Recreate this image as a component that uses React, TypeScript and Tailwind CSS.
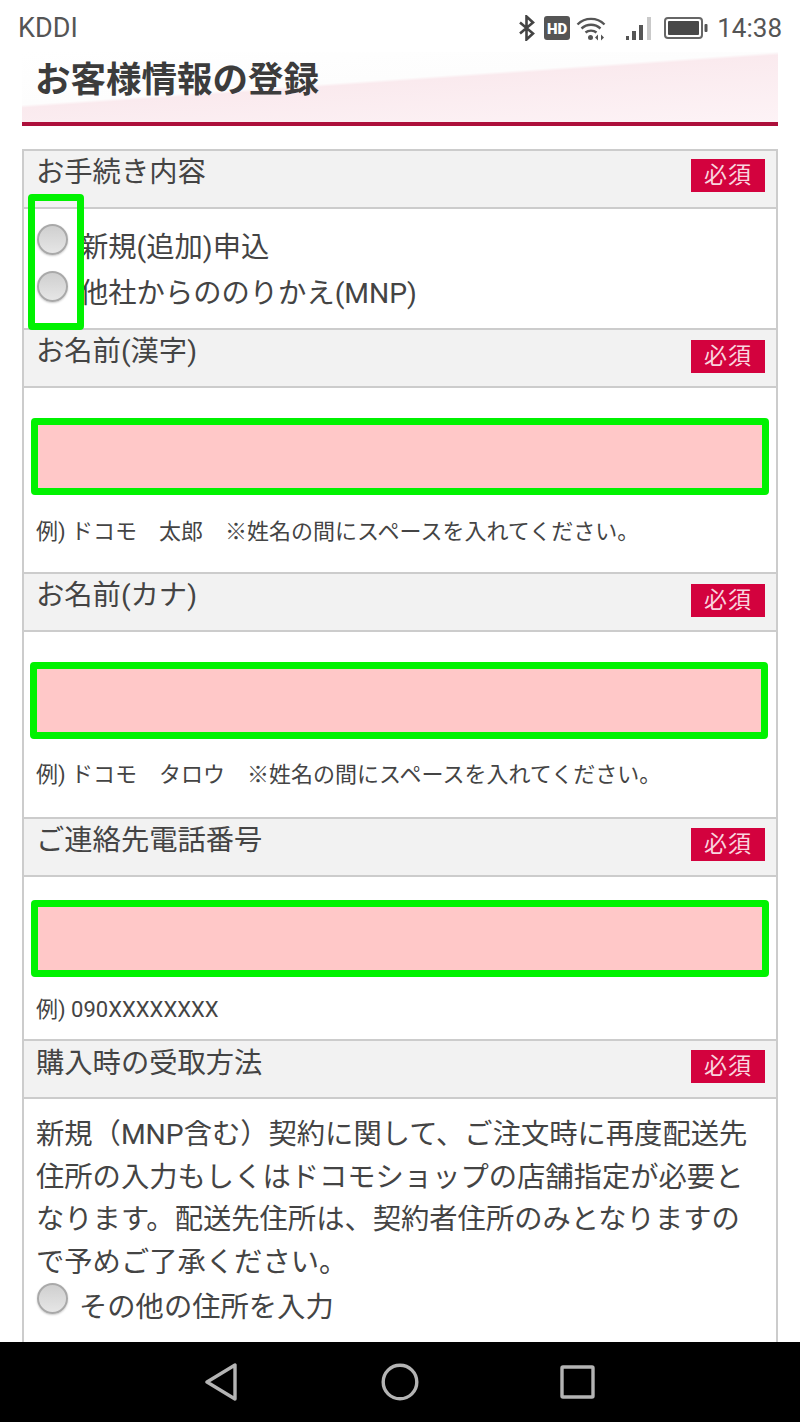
const Radio = () => (
  <span className="block w-[31px] h-[31px] shrink-0 rounded-full border-2 border-[#a9a9a9] bg-[linear-gradient(180deg,#cfcfcf,#e6e6e6)] shadow-[0_1px_2px_#cccccc]" />
);

const Header = ({ label, badge, text }: { label: string; badge: string; text: string }) => (
  <div className="h-[58px] flex justify-between bg-[#f2f2f2] border-b-2 border-[#cccccc] pl-[12px] pr-[11px]">
    <span className={`${text} text-[28.3px] leading-[40px] text-[#444444]`}>{label}</span>
    <span className={`${badge} w-[74px] h-[33px] flex items-center justify-center bg-[#d3023e] text-[#f9d5df] text-[23px] leading-none tracking-[1px]`}>必須</span>
  </div>
);

const Field = ({ hint, pt, pb, mt, dx }: { hint: string; pt: string; pb: string; mt: string; dx: string }) => (
  <div className={`border-b-2 border-[#cccccc] ${pt} ${pb}`}>
    <div className={`h-[77px] ${dx} w-[738px] border-[7px] border-[#00f200] bg-[#ffc8c8] rounded-[4px]`} />
    <p className={`${mt} pl-[12px] text-[22px] leading-[32px] text-[#444444] whitespace-pre`}>{hint}</p>
  </div>
);

export default function App() {
  return (
    <div className="w-[800px] h-[1422px] flex flex-col overflow-hidden bg-white font-['Roboto','Noto_Sans_CJK_JP',sans-serif]">
      <div className="h-[52px] shrink-0 flex items-center justify-between pl-[18px] pr-[18px] text-[#555555]">
        <span className="text-[27px] leading-none mt-[4px]">KDDI</span>
        <div className="flex items-center mt-[4px]">
          <svg width="18" height="26" viewBox="0 0 18 26" fill="none" stroke="#444" strokeWidth="2.6" className="mr-[8px]">
            <path d="M2 7.5 15 18.5 8.5 24.5V1.5L15 7.5 2 18.5" />
          </svg>
          <svg width="26" height="24" viewBox="0 0 26 24" className="mr-[6px]">
            <rect width="26" height="24" rx="3" fill="#555" />
            <text x="13" y="17.5" textAnchor="middle" fontSize="15" fontWeight="900" fill="#fff" fontFamily="Roboto">HD</text>
          </svg>
          <svg width="31" height="25" viewBox="0 0 31 25" fill="none" stroke="#555" strokeWidth="2.4" className="mr-[19px]">
            <path d="M1.5 8.5C9 1 21 1 28.5 8.5" />
            <path d="M5.5 12.5C11 7.5 19 7.5 24.5 12.5" />
            <path d="M9.5 16.5C12.5 14 17.5 14 20.5 16.5" />
            <circle cx="14.5" cy="21.5" r="2.5" fill="#555" stroke="none" />
            <path d="M22 18.5v6l-3-3zM25 18.5v6l3-3z" fill="#555" stroke="none" />
          </svg>
          <svg width="26" height="25" viewBox="0 0 26 25" className="mr-[12px]">
            <rect x="0" y="20" width="3" height="4" fill="#555" />
            <rect x="6" y="15" width="4" height="9" fill="#555" />
            <rect x="13" y="9" width="4" height="15" fill="#555" />
            <rect x="21" y="1" width="4" height="23" fill="#c9c9c9" />
          </svg>
          <svg width="44" height="22" viewBox="0 0 44 22" className="mr-[9px]">
            <rect x="1" y="1" width="37" height="20" rx="3" fill="none" stroke="#666" strokeWidth="2" />
            <rect x="4" y="4" width="31" height="14" rx="1" fill="#484848" />
            <rect x="40.5" y="7" width="3" height="8" rx="1" fill="#555" />
          </svg>
          <span className="text-[26px] leading-none">14:38</span>
        </div>
      </div>

      <div className="mx-[22px] h-[74px] shrink-0 border-b-[4px] border-[#ad0f3b] bg-[linear-gradient(176deg,#ffffff_0%,#fdfdfd_43%,#faeaee_45.5%,#fdf3f6_100%)] pl-[13px]">
        <h1 className="text-[35.5px] leading-[50px] mt-[3px] font-bold text-[#3c3c3c]">お客様情報の登録</h1>
      </div>

      <div className="relative flex-1 min-h-0 overflow-hidden mt-[23px]">
        <div className="mx-[22px] border-x-2 border-t-2 border-[#cccccc]">
          <Header label="お手続き内容" badge="mt-[8px]" text="mt-[2px]" />
          <div className="h-[121px] border-b-2 border-[#cccccc] pt-[15px] pl-[13px] text-[28.3px] text-[#444444]">
            <div className="flex h-[47px] gap-[12px]">
              <Radio />
              <span className="leading-[46px] mt-[1px]">新規(追加)申込</span>
            </div>
            <div className="flex h-[47px] gap-[12px]">
              <Radio />
              <span className="leading-[46px]">他社からののりかえ(MNP)</span>
            </div>
          </div>

          <Header label="お名前(漢字)" badge="mt-[10px]" text="mt-[2px]" />
          <Field hint="例) ドコモ　太郎　※姓名の間にスペースを入れてください。" pt="pt-[30px]" pb="pb-[24px]" mt="mt-[21px]" dx="ml-[7px]" />

          <Header label="お名前(カナ)" badge="mt-[10px]" text="mt-[2px]" />
          <Field hint="例) ドコモ　タロウ　※姓名の間にスペースを入れてください。" pt="pt-[30px]" pb="pb-[26px]" mt="mt-[20px]" dx="ml-[6px]" />

          <Header label="ご連絡先電話番号" badge="mt-[9px]" text="mt-[2px]" />
          <Field hint="例) 090XXXXXXXX" pt="pt-[23px]" pb="pb-[13px]" mt="mt-[17px]" dx="ml-[7px]" />

          <Header label="購入時の受取方法" badge="mt-[9px]" text="mt-[3px]" />
          <div className="pt-[15px] pl-[12px] pr-[14px] pb-[30px] text-[28.3px] text-[#444444]">
            <p className="leading-[42.6px]">新規（MNP含む）契約に関して、ご注文時に再度配送先住所の入力もしくはドコモショップの店舗指定が必要となります。配送先住所は、契約者住所のみとなりますので予めご了承ください。</p>
            <div className="flex gap-[11px] -mt-[1px] pl-[1px]">
              <Radio />
              <span className="leading-[40px] mt-[5px]">その他の住所を入力</span>
            </div>
          </div>
        </div>
        <div className="absolute left-[28px] top-[45px] w-[56px] h-[136px] border-[7px] border-[#00f200] rounded-[4px]" />
      </div>

      <div className="h-[80px] shrink-0 bg-black flex items-center pl-[205px]">
        <svg width="32" height="38" viewBox="0 0 32 38" fill="none" stroke="#b4b4b4" strokeWidth="3.4" strokeLinejoin="round">
          <path d="M30 2V36L2 19Z" />
        </svg>
        <svg width="38" height="38" viewBox="0 0 38 38" fill="none" stroke="#b4b4b4" strokeWidth="3.4" className="ml-[144px]">
          <circle cx="19" cy="19" r="16.8" />
        </svg>
        <svg width="36" height="34" viewBox="0 0 36 34" fill="none" stroke="#b4b4b4" strokeWidth="3.4" strokeLinejoin="round" className="ml-[141px]">
          <rect x="2" y="2" width="31" height="30" rx="1" />
        </svg>
      </div>
    </div>
  );
}
